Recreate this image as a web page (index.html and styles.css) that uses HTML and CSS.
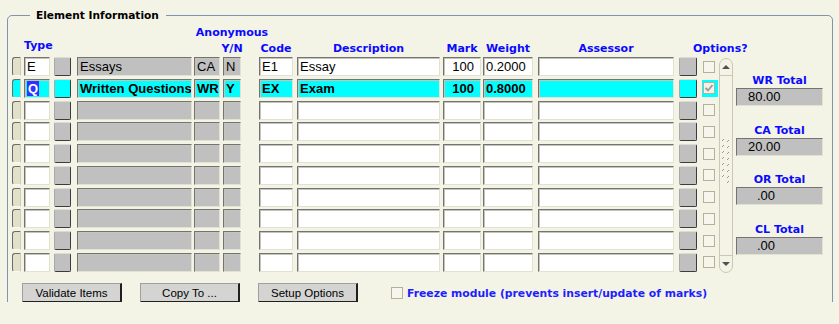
FILE: index.html
```html
<!DOCTYPE html>
<html lang="en">
<head>
    <meta charset="UTF-8">
    <title>Element Information</title>
    <link rel="stylesheet" href="styles.css">
</head>
<body>
    <fieldset class="panel">
        <legend>Element Information</legend>
        <div class="main">
            <div class="block">
                <div class="head">
                    <div class="c-ind"></div>
                    <div class="c-type lbl-type">Type</div>
                    <div class="c-btn"></div>
                    <div class="c-desc"></div>
                    <div class="c-cat"></div>
                    <div class="c-yn anon"><span>Anonymous</span><span>Y/N</span></div>
                    <div class="c-code">Code</div>
                    <div class="c-descr">Description</div>
                    <div class="c-mark">Mark</div>
                    <div class="c-wt">Weight</div>
                    <div class="c-ass">Assessor</div>
                    <div class="c-abtn"></div>
                    <div class="c-opt"><span class="lbl-opt">Options?</span></div>
                </div>
                <div class="body">
                    <div class="rows">
                        <div class="row">
                            <div class="c-ind ind"></div>
                            <div class="c-type f">E</div>
                            <div class="c-btn sb"></div>
                            <div class="c-desc f grey">Essays</div>
                            <div class="c-cat f grey">CA</div>
                            <div class="c-yn f grey">N</div>
                            <div class="c-code f">E1</div>
                            <div class="c-descr f">Essay</div>
                            <div class="c-mark f num">100</div>
                            <div class="c-wt f">0.2000</div>
                            <div class="c-ass f"></div>
                            <div class="c-abtn sb"></div>
                            <div class="c-opt opt"><span class="chk"></span></div>
                        </div>
                        <div class="row cur">
                            <div class="c-ind ind"></div>
                            <div class="c-type f"><span class="sel">Q</span></div>
                            <div class="c-btn sb"></div>
                            <div class="c-desc f grey">Written Questions</div>
                            <div class="c-cat f grey">WR</div>
                            <div class="c-yn f grey">Y</div>
                            <div class="c-code f">EX</div>
                            <div class="c-descr f">Exam</div>
                            <div class="c-mark f num">100</div>
                            <div class="c-wt f">0.8000</div>
                            <div class="c-ass f"></div>
                            <div class="c-abtn sb"></div>
                            <div class="c-opt opt"><span class="chk"><svg width="10" height="10" viewBox="0 0 10 10"><path d="M1.5 5 L4 7.5 L8.5 2" fill="none" stroke="#9a9a92" stroke-width="1.8"/></svg></span></div>
                        </div>
                        <div class="row">
                            <div class="c-ind ind"></div><div class="c-type f"></div><div class="c-btn sb"></div><div class="c-desc f grey"></div><div class="c-cat f grey"></div><div class="c-yn f grey"></div><div class="c-code f"></div><div class="c-descr f"></div><div class="c-mark f"></div><div class="c-wt f"></div><div class="c-ass f"></div><div class="c-abtn sb"></div><div class="c-opt opt"><span class="chk"></span></div>
                        </div>
                        <div class="row">
                            <div class="c-ind ind"></div><div class="c-type f"></div><div class="c-btn sb"></div><div class="c-desc f grey"></div><div class="c-cat f grey"></div><div class="c-yn f grey"></div><div class="c-code f"></div><div class="c-descr f"></div><div class="c-mark f"></div><div class="c-wt f"></div><div class="c-ass f"></div><div class="c-abtn sb"></div><div class="c-opt opt"><span class="chk"></span></div>
                        </div>
                        <div class="row">
                            <div class="c-ind ind"></div><div class="c-type f"></div><div class="c-btn sb"></div><div class="c-desc f grey"></div><div class="c-cat f grey"></div><div class="c-yn f grey"></div><div class="c-code f"></div><div class="c-descr f"></div><div class="c-mark f"></div><div class="c-wt f"></div><div class="c-ass f"></div><div class="c-abtn sb"></div><div class="c-opt opt"><span class="chk"></span></div>
                        </div>
                        <div class="row">
                            <div class="c-ind ind"></div><div class="c-type f"></div><div class="c-btn sb"></div><div class="c-desc f grey"></div><div class="c-cat f grey"></div><div class="c-yn f grey"></div><div class="c-code f"></div><div class="c-descr f"></div><div class="c-mark f"></div><div class="c-wt f"></div><div class="c-ass f"></div><div class="c-abtn sb"></div><div class="c-opt opt"><span class="chk"></span></div>
                        </div>
                        <div class="row">
                            <div class="c-ind ind"></div><div class="c-type f"></div><div class="c-btn sb"></div><div class="c-desc f grey"></div><div class="c-cat f grey"></div><div class="c-yn f grey"></div><div class="c-code f"></div><div class="c-descr f"></div><div class="c-mark f"></div><div class="c-wt f"></div><div class="c-ass f"></div><div class="c-abtn sb"></div><div class="c-opt opt"><span class="chk"></span></div>
                        </div>
                        <div class="row">
                            <div class="c-ind ind"></div><div class="c-type f"></div><div class="c-btn sb"></div><div class="c-desc f grey"></div><div class="c-cat f grey"></div><div class="c-yn f grey"></div><div class="c-code f"></div><div class="c-descr f"></div><div class="c-mark f"></div><div class="c-wt f"></div><div class="c-ass f"></div><div class="c-abtn sb"></div><div class="c-opt opt"><span class="chk"></span></div>
                        </div>
                        <div class="row">
                            <div class="c-ind ind"></div><div class="c-type f"></div><div class="c-btn sb"></div><div class="c-desc f grey"></div><div class="c-cat f grey"></div><div class="c-yn f grey"></div><div class="c-code f"></div><div class="c-descr f"></div><div class="c-mark f"></div><div class="c-wt f"></div><div class="c-ass f"></div><div class="c-abtn sb"></div><div class="c-opt opt"><span class="chk"></span></div>
                        </div>
                        <div class="row">
                            <div class="c-ind ind"></div><div class="c-type f"></div><div class="c-btn sb"></div><div class="c-desc f grey"></div><div class="c-cat f grey"></div><div class="c-yn f grey"></div><div class="c-code f"></div><div class="c-descr f"></div><div class="c-mark f"></div><div class="c-wt f"></div><div class="c-ass f"></div><div class="c-abtn sb"></div><div class="c-opt opt"><span class="chk"></span></div>
                        </div>
                    </div>
                    <div class="scroll">
                        <div class="s-up"><svg width="10" height="6" viewBox="0 0 10 6"><path d="M1 5 L5 1 L9 5 Z" fill="#505050"/></svg></div>
                        <div class="s-track">
                            <svg class="grip" width="10" height="46" viewBox="0 0 10 46">
                                <g stroke="#9a9a88" stroke-width="1">
                                    <path d="M1 3 L3 1 M6 4 L8 2"/>
                                    <path d="M1 9 L3 7 M6 10 L8 8"/>
                                    <path d="M1 15 L3 13 M6 16 L8 14"/>
                                    <path d="M1 21 L3 19 M6 22 L8 20"/>
                                    <path d="M1 27 L3 25 M6 28 L8 26"/>
                                    <path d="M1 33 L3 31 M6 34 L8 32"/>
                                    <path d="M1 39 L3 37 M6 40 L8 38"/>
                                    <path d="M6 45 L8 43"/>
                                </g>
                            </svg>
                        </div>
                        <div class="s-down"><svg width="10" height="6" viewBox="0 0 10 6"><path d="M1 1 L9 1 L5 5 Z" fill="#505050"/></svg></div>
                    </div>
                </div>
            </div>
            <div class="totals">
                <div class="tot">
                    <div class="tl">WR Total</div>
                    <div class="tv">80.00</div>
                </div>
                <div class="tot">
                    <div class="tl">CA Total</div>
                    <div class="tv">20.00</div>
                </div>
                <div class="tot">
                    <div class="tl">OR Total</div>
                    <div class="tv zero">.00</div>
                </div>
                <div class="tot">
                    <div class="tl">CL Total</div>
                    <div class="tv zero">.00</div>
                </div>
            </div>
        </div>
        <div class="actions">
            <button class="btn">Validate Items</button>
            <button class="btn">Copy To ...</button>
            <button class="btn">Setup Options</button>
            <label class="freeze"><span class="chk"></span>Freeze module (prevents insert/update of marks)</label>
        </div>
    </fieldset>
</body>
</html>
```
FILE: styles.css
```css
body {
    margin: 0;
    background: #f4f4e6;
    font-family: "Liberation Sans", Arial, sans-serif;
    font-size: 13px;
    color: #000;
}
.panel {
    margin: 0 0 0 7px;
    padding: 0 8px 0 4px;
    width: 826px;
    height: 302px;
    box-sizing: border-box;
    border: 1px solid #7f94ad;
    border-radius: 5px;
    position: relative;
    top: 9px;
}
.panel legend {
    margin-left: 18px;
    padding: 0 7px 0 6px;
    font: bold 10.6px/13px "DejaVu Sans", sans-serif;
}
.main {
    display: flex;
    align-items: flex-start;
}
.head {
    display: flex;
    align-items: flex-end;
    height: 33px;
    font: bold 11px/13px "DejaVu Sans", sans-serif;
    color: #0a0aff;
    text-align: center;
    white-space: nowrap;
}
.lbl-type { margin-bottom: 3px; }
.anon {
    display: flex;
    flex-direction: column;
    align-items: center;
    gap: 3px;
}
.lbl-opt {
    display: block;
    margin-left: -9px;
    text-align: left;
}
.body {
    display: flex;
    margin-top: 2px;
}
.rows {
    display: flex;
    flex-direction: column;
    gap: 2.75px;
}
.row {
    display: flex;
    align-items: center;
    height: 19px;
}

/* column widths / spacing */
.c-ind   { width: 9px;   flex: none; }
.c-type  { width: 26px;  flex: none; margin-left: 3px; }
.c-btn   { width: 17px;  flex: none; margin-left: 4px; }
.c-desc  { width: 115px; flex: none; margin-left: 6px; }
.c-cat   { width: 26px;  flex: none; margin-left: 2px; }
.c-yn    { width: 18px;  flex: none; margin-left: 3px; }
.c-code  { width: 34px;  flex: none; margin-left: 18px; }
.c-descr { width: 143px; flex: none; margin-left: 4px; }
.c-mark  { width: 38px;  flex: none; margin-left: 3px; }
.c-wt    { width: 50px;  flex: none; margin-left: 2px; }
.c-ass   { width: 136px; flex: none; margin-left: 5px; }
.c-abtn  { width: 18px;  flex: none; margin-left: 5px; }
.c-opt   { width: 16px;  flex: none; margin-left: 5px; }

.f {
    height: 19px;
    box-sizing: border-box;
    background: #fff;
    border: 1px solid;
    border-color: #737373 #e2e2d0 #e2e2d0 #737373;
    box-shadow: inset 1px 1px 0 #c4c4b8;
    padding: 0 2px 0 2px;
    line-height: 17px;
    white-space: nowrap;
    overflow: hidden;
}
.f.grey { background: #c0c0c0; }
.f.num { text-align: right; padding-right: 6px; }
.ind {
    height: 19px;
    box-sizing: border-box;
    background: #e2e0c9;
    border: 1px solid;
    border-color: #6c6c6c #cfcdb6 #fafaf2 #6c6c6c;
    border-radius: 3px 0 0 3px;
}
.sb {
    height: 19px;
    box-sizing: border-box;
    background: #c0c0c0;
    border: 1px solid;
    border-color: #dcdcd4 #3c3c3c #3c3c3c #a8a8a8;
    border-radius: 2px;
}
.opt {
    height: 17px;
    display: flex;
    align-items: center;
    padding-left: 1px;
    box-sizing: border-box;
}
.chk {
    width: 12px;
    height: 12px;
    box-sizing: border-box;
    border: 1px solid #b3b198;
    background: #f6f6ec;
    display: flex;
    align-items: center;
    justify-content: center;
    flex: none;
}
.cur .f, .cur .ind, .cur .sb, .cur .opt { background: #00ffff; }
.cur .f { font-weight: bold; }
.cur .chk { background: #f2f2ea; }
.sel {
    background: #3232ff;
    color: #fff;
    padding: 0 1px;
}

.scroll {
    width: 14px;
    height: 215px;
    margin: 1px 0 0 1px;
    box-sizing: border-box;
    border: 1px solid #cac8b2;
    border-radius: 7px;
    display: flex;
    flex-direction: column;
}
.s-up, .s-down {
    height: 16px;
    display: flex;
    align-items: center;
    justify-content: center;
}
.s-up { border-bottom: 1px solid #cac8b2; }
.s-down { border-top: 1px solid #cac8b2; }
.s-track {
    flex: 1;
    padding-top: 62px;
    display: flex;
    justify-content: center;
}

.totals {
    width: 87px;
    margin: 52px 0 0 3px;
    display: flex;
    flex-direction: column;
    gap: 17.7px;
}
.tl {
    font: bold 11px/13px "DejaVu Sans", sans-serif;
    color: #0a0aff;
    text-align: center;
}
.tv {
    margin-top: 1px;
    height: 18px;
    box-sizing: border-box;
    background: #c0c0c0;
    border: 1px solid;
    border-color: #737373 #e2e2d0 #e2e2d0 #737373;
    padding-left: 11px;
    line-height: 16px;
}
.tv.zero { padding-left: 20px; }

.actions {
    display: flex;
    align-items: center;
    margin-top: 10px;
}
.btn {
    width: 100px;
    height: 20px;
    margin: 0 18px 0 0;
    padding: 0;
    background: #d4d4d2;
    border: 1px solid;
    border-color: #a0a0a0 #202020 #202020 #a0a0a0;
    border-width: 1px 2px 2px 1px;
    font: 11.5px "Liberation Sans", Arial, sans-serif;
    color: #000;
}
.btn:first-child { margin-left: 10px; }
.freeze {
    display: flex;
    align-items: center;
    margin-left: 15px;
    gap: 4px;
    font: bold 10.8px/13px "DejaVu Sans", sans-serif;
    color: #1e1eff;
}
```
